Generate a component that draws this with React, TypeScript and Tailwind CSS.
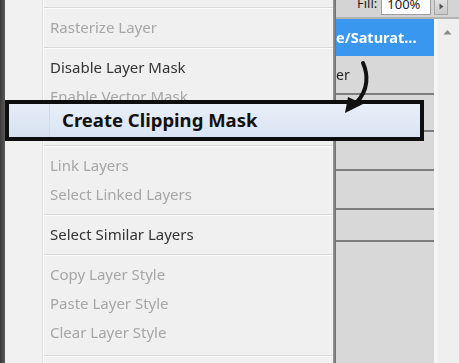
import React from "react";

const font = { fontFamily: '"Noto Sans", "Open Sans", sans-serif' };

function Sep() {
  return (
    <div className="h-[11px] flex flex-col justify-center">
      <div className="h-px bg-[#d9d9d9]" />
      <div className="h-px bg-[#fbfbfb]" />
    </div>
  );
}

function Item({ label, enabled, hidden }: { label: string; enabled?: boolean; hidden?: boolean }) {
  return (
    <div
      className={
        "h-[29px] flex items-center pl-[6px] text-[15px] whitespace-nowrap " +
        (enabled ? "text-[#333333]" : "text-[#a6a6a6]")
      }
    >
      <span className={hidden ? "invisible" : ""}>{label}</span>
    </div>
  );
}

export default function App() {
  return (
    <div
      className="relative w-[459px] h-[363px] overflow-hidden flex bg-[#f0f0f0]"
      style={font}
    >
      {/* left dark strip */}
      <div className="w-[5px] h-full bg-gradient-to-r from-[#3a3a3a] to-[#5a5a5a]" />

      {/* context menu */}
      <div className="w-[328px] h-full flex bg-[#f0f0f0]">
        <div className="w-[38px] h-full bg-[#f1f1f1] border-r border-[#e0e0e0]" />
        <div className="w-px h-full bg-[#fcfcfc]" />
        <div className="flex-1 flex flex-col [filter:blur(0.45px)]">
          <div className="h-[2px]" />
          <Sep />
          <Item label="Rasterize Layer" />
          <Sep />
          <Item label="Disable Layer Mask" enabled />
          <Item label="Enable Vector Mask" />
          <Item label="Create Clipping Mask" enabled hidden />
          <Sep />
          <Item label="Link Layers" />
          <Item label="Select Linked Layers" />
          <Sep />
          <Item label="Select Similar Layers" enabled />
          <Sep />
          <Item label="Copy Layer Style" />
          <Item label="Paste Layer Style" />
          <Item label="Clear Layer Style" />
          <div className="h-[3px]" />
          <Sep />
        </div>
      </div>

      {/* menu shadow / panel edge */}
      <div className="w-[3px] h-full bg-gradient-to-r from-[#9a9a9a] to-[#6c6c6c]" />

      {/* layers panel */}
      <div className="flex-1 h-full flex flex-col bg-[#d6d6d6]">
        <div className="h-[19px] flex items-start bg-[#d4d4d4] border-b-2 border-[#b4b4b4]">
          <div className="ml-[21px] mt-[-3px] text-[13px] text-[#222] leading-none">Fill:</div>
          <div className="ml-[4px] mt-[-2px] w-[50px] h-[17px] bg-white border border-[#9c9c9c] text-[13px] text-[#222] leading-none pl-[5px] flex items-start">
            <span className="mt-[-1px]">100%</span>
          </div>
          <div className="ml-[3px] mt-[-2px] w-[14px] h-[17px] bg-gradient-to-b from-[#e4e4e4] to-[#c8c8c8] border border-[#a8a8a8] flex items-center justify-center">
            <svg width="5" height="7" viewBox="0 0 5 7">
              <path d="M0.5 0.5 L4.5 3.5 L0.5 6.5 Z" fill="#555" />
            </svg>
          </div>
        </div>
        <div className="flex-1 flex">
          <div className="w-[98px] flex flex-col">
            <div className="h-[37px] bg-[#3a97f0] flex items-center text-white font-bold text-[14.5px] whitespace-nowrap overflow-hidden [filter:blur(0.3px)]">
              <span>e/Saturat...</span>
            </div>
            <div className="h-[39px] bg-[#d8d8d8] flex items-center text-[#222] text-[14px] border-b-2 border-[#7c7c7c] whitespace-nowrap [filter:blur(0.3px)]">
              <span>er</span>
            </div>
            <div className="h-[37px] bg-[#d8d8d8] border-b-2 border-[#7c7c7c]" />
            <div className="h-[39px] bg-[#d8d8d8] border-b-2 border-[#7c7c7c]" />
            <div className="h-[39px] bg-[#d8d8d8] border-b-2 border-[#7c7c7c]" />
            <div className="h-[32px] bg-[#d8d8d8] border-b-2 border-[#7c7c7c]" />
            <div className="flex-1 bg-[#d8d8d8]" />
          </div>
          <div className="flex-1 bg-[#efefef] border-l-4 border-[#f6f6f6] flex flex-col items-center">
            <svg className="mt-[10px] mr-[2px]" width="9" height="6" viewBox="0 0 9 6">
              <path d="M0.5 5.5 L4.5 1 L8.5 5.5 Z" fill="#8a8a8a" />
            </svg>
            <div className="flex-1" />
          </div>
        </div>
      </div>

      {/* highlighted (enlarged) item overlay */}
      <div className="absolute left-[5px] top-[100px] w-[419px] h-[41px] border-4 border-[#0e0e0e] bg-gradient-to-b from-[#e9eff8] to-[#d9e4f3] flex">
        <div className="w-[41px] h-full bg-gradient-to-b from-[#e6edf7] to-[#d6e1f1] border-r border-[#cfd9e8]" />
        <div className="pl-[12px] flex items-center text-[18.5px] font-bold text-[#111] whitespace-nowrap leading-none">
          Create Clipping Mask
        </div>
      </div>

      {/* hand-drawn arrow */}
      <svg className="absolute left-0 top-0 pointer-events-none" width="459" height="363">
        <path
          d="M363 63 C368 74, 369 90, 356 103"
          stroke="#111"
          strokeWidth="4"
          fill="none"
          strokeLinecap="round"
        />
        <path d="M345 113 L348 97 L363 104 Z" fill="#111" />
      </svg>
    </div>
  );
}
